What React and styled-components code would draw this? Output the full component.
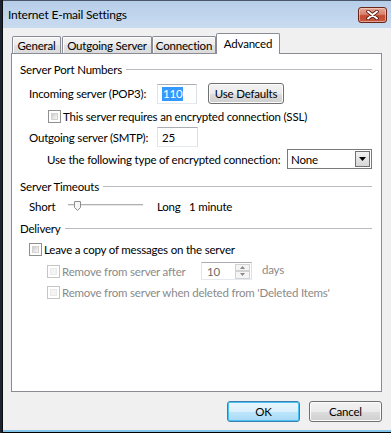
import React from "react";
import styled, { createGlobalStyle } from "styled-components";

const Global = createGlobalStyle`
  html, body { margin: 0; padding: 0; }
  body {
    width: 391px; height: 433px; overflow: hidden;
    background: #1b2435;
    font-family: Lato, "Noto Sans", sans-serif;
    font-size: 11.5px; letter-spacing: -0.2px; color: #000;
  }
  * { box-sizing: border-box; }
`;

const Window = styled.div`
  margin-left: 2px;
  width: 389px;
  height: 433px;
  border-left: 1px solid #0d0d0d;
  border-bottom: 1px solid #000;
  display: flex;
  flex-direction: column;
  background: #c4d8ee;
`;

const TitleBar = styled.div`
  height: 28px;
  border-top: 1px solid #4a5668;
  background: linear-gradient(#b6cde8 0%, #bfd4ec 40%, #c8dbf0 100%);
  display: flex;
  align-items: flex-start;
  padding-left: 5px;
`;

const Title = styled.div`
  margin-top: 6px;
  font-size: 12px;
  line-height: 16px;
  color: #000;
`;

const CloseButton = styled.div`
  margin-left: auto;
  margin-right: 4px;
  margin-top: 6px;
  width: 29px;
  height: 16px;
  border: 1px solid #6b2418;
  border-radius: 3px;
  background: linear-gradient(#e4a796 0%, #d88370 45%, #c44a33 55%, #c65a40 100%);
  box-shadow: inset 0 0 0 1px rgba(255, 220, 210, 0.55);
  display: flex;
  align-items: center;
  justify-content: center;
`;

const Client = styled.div`
  height: 402px;
  background: #f0f0f0;
  padding: 5px 9px 0 8px;
  display: flex;
  flex-direction: column;
`;

const BottomEdge = styled.div`
  height: 2px;
  background: #86c3e8;
`;

const TabRow = styled.div`
  display: flex;
  align-items: flex-end;
  height: 20px;
  padding-left: 1px;
  position: relative;
  z-index: 1;
`;

const Tab = styled.div`
  width: ${(p) => p.$w}px;
  height: ${(p) => (p.$active ? 21 : 17)}px;
  margin-right: ${(p) => p.$gap || 0}px;
  margin-bottom: ${(p) => (p.$active ? -1 : 0)}px;
  border: 1px solid #898c95;
  border-bottom: none;
  border-radius: 2px 2px 0 0;
  background: ${(p) =>
    p.$active
      ? "#ffffff"
      : "linear-gradient(#f4f4f4 0%, #ececec 50%, #e2e2e2 51%, #dbdbdb 100%)"};
  box-shadow: ${(p) => (p.$active ? "none" : "inset 1px 1px 0 #fcfcfc")};
  display: flex;
  align-items: center;
  justify-content: center;
  line-height: 15px;
  white-space: nowrap;
  padding-bottom: ${(p) => (p.$active ? 2 : 0)}px;
`;

const Panel = styled.div`
  height: 339px;
  border: 1px solid #898c95;
  background: #ffffff;
  padding: 8px 9px 0 8px;
  display: flex;
  flex-direction: column;
`;

const Header = styled.div`
  display: flex;
  align-items: center;
  height: 15px;
  line-height: 15px;
  margin-top: ${(p) => p.$mt || 0}px;
  white-space: nowrap;
  &::after {
    content: "";
    flex: 1;
    height: 1px;
    margin-left: 4px;
    background: #b8bcc0;
  }
`;

const Row = styled.div`
  display: flex;
  align-items: center;
  height: ${(p) => p.$h}px;
  margin-top: ${(p) => p.$mt}px;
  margin-left: ${(p) => p.$indent}px;
  white-space: nowrap;
  line-height: 15px;
`;

const Label = styled.span`
  width: ${(p) => (p.$w ? `${p.$w}px` : "auto")};
  flex: none;
  margin-left: ${(p) => p.$ml || 0}px;
  color: ${(p) => (p.$disabled ? "#8a8a8a" : "#000")};
  margin-top: ${(p) => p.$dy || 0}px;
`;

const TextBox = styled.div`
  width: ${(p) => p.$w}px;
  height: 20px;
  flex: none;
  border: 1px solid;
  border-color: #abadb3 #dbdfe6 #e3e9ef #e2e3ea;
  background: #fff;
  display: flex;
  align-items: center;
  padding-left: 4px;
`;

const Selected = styled.span`
  background: #3399ff;
  color: #fff;
  line-height: 14px;
  padding: 0 1px;
`;

const Button = styled.div`
  width: ${(p) => p.$w}px;
  height: 21px;
  flex: none;
  margin-left: ${(p) => p.$ml || 0}px;
  border: 1px solid ${(p) => (p.$default ? "#3c7fb1" : "#707070")};
  border-radius: 3px;
  background: ${(p) =>
    p.$default
      ? "linear-gradient(#eaf6fd 0%, #d9f0fc 50%, #bee6fd 51%, #a7d9f5 100%)"
      : "linear-gradient(#f2f2f2 0%, #ebebeb 50%, #dddddd 51%, #cfcfcf 100%)"};
  box-shadow: inset 0 0 0 1px ${(p) => (p.$default ? "#4ac0f5" : "#fcfcfc")};
  display: flex;
  align-items: center;
  justify-content: center;
  line-height: 15px;
`;

const CheckBox = styled.span`
  width: 13px;
  height: 13px;
  flex: none;
  position: relative;
  border: 1px solid ${(p) => (p.$disabled ? "#c5c5c5" : "#8e8f8f")};
  background: #fff;
  margin-right: 2px;
  &::after {
    content: "";
    position: absolute;
    inset: 2px;
    background: ${(p) =>
      p.$disabled
        ? "#f4f4f4"
        : "linear-gradient(135deg, #cbcbcb 0%, #e6e6e6 55%, #f7f7f7 100%)"};
    border: 1px solid ${(p) => (p.$disabled ? "#eaeaea" : "#d2d2d2")};
  }
`;

const CheckLabel = styled.span`
  display: flex;
  align-items: center;
  width: ${(p) => (p.$w ? `${p.$w}px` : "auto")};
  flex: none;
  color: ${(p) => (p.$disabled ? "#8a8a8a" : "#000")};
`;

const Select = styled.div`
  margin-left: auto;
  width: 85px;
  height: 20px;
  flex: none;
  border: 1px solid #7a7a7a;
  background: #fff;
  display: flex;
  align-items: center;
  padding: 1px;
  padding-left: 3px;
`;

const SelectArrow = styled.div`
  margin-left: auto;
  width: 15px;
  height: 16px;
  border: 1px solid #707070;
  background: linear-gradient(#f2f2f2, #d6d6d6);
  display: flex;
  align-items: center;
  justify-content: center;
`;

const Spinner = styled.div`
  width: 51px;
  height: 18px;
  flex: none;
  border: 1px solid;
  border-color: #abadb3 #dbdfe6 #e3e9ef #e2e3ea;
  background: #fff;
  display: flex;
  align-items: center;
  padding: 1px 1px 1px 5px;
  color: #6d6d6d;
`;

const SpinButtons = styled.div`
  margin-left: auto;
  width: 15px;
  height: 15px;
  display: flex;
  flex-direction: column;
`;

const SpinButton = styled.div`
  flex: 1;
  border: 1px solid #d2d2d2;
  background: #f4f4f4;
  display: flex;
  align-items: center;
  justify-content: center;
`;

const Footer = styled.div`
  display: flex;
  justify-content: flex-end;
  gap: 9px;
  margin-top: 9px;
`;

function Check({ disabled, children, w }) {
  return (
    <CheckLabel $disabled={disabled} $w={w}>
      <CheckBox $disabled={disabled} />
      {children}
    </CheckLabel>
  );
}

function Slider() {
  return (
    <svg width="78" height="12" viewBox="0 0 78 12" style={{ flex: "none" }}>
      <rect x="1" y="4" width="75" height="1" fill="#b0b0b0" />
      <rect x="1" y="5" width="75" height="1" fill="#e6e6e6" />
      <path d="M7.5 1.5 H13.5 V7.5 L10.5 10.5 L7.5 7.5 Z" fill="#f4f4f4" stroke="#8e8e8e" />
      <line x1="9" y1="3" x2="9" y2="7.5" stroke="#ffffff" />
    </svg>
  );
}

function Tri({ up, color = "#8a8a8a", size = 4 }) {
  return (
    <svg width={size * 2 - 1} height={size} viewBox={`0 0 ${size * 2 - 1} ${size}`}>
      <path
        d={up ? `M0 ${size} L${size - 0.5} 0 L${size * 2 - 1} ${size} Z` : `M0 0 L${size - 0.5} ${size} L${size * 2 - 1} 0 Z`}
        fill={color}
      />
    </svg>
  );
}

export default function App() {
  return (
    <>
      <Global />
      <Window>
        <TitleBar>
          <Title>Internet E-mail Settings</Title>
          <CloseButton>
            <svg width="13" height="10" viewBox="0 0 13 10">
              <path d="M2 1.5 L11 8.5 M11 1.5 L2 8.5" stroke="#5a1a10" strokeWidth="3.6" strokeLinecap="round" />
              <path d="M2 1.5 L11 8.5 M11 1.5 L2 8.5" stroke="#ffffff" strokeWidth="2" strokeLinecap="round" />
            </svg>
          </CloseButton>
        </TitleBar>
        <Client>
          <TabRow>
            <Tab $w={49} $gap={1}>General</Tab>
            <Tab $w={90}>Outgoing Server</Tab>
            <Tab $w={64}>Connection</Tab>
            <Tab $w={64} $active>Advanced</Tab>
          </TabRow>
          <Panel>
            <Header>Server Port Numbers</Header>
            <Row $mt={6} $h={21} $indent={9}>
              <Label $w={128}>Incoming server (POP3):</Label>
              <TextBox $w={40}>
                <Selected>110</Selected>
              </TextBox>
              <Button $w={76} $ml={11}>Use Defaults</Button>
            </Row>
            <Row $mt={6} $h={13} $indent={28}>
              <Check>This server requires an encrypted connection (SSL)</Check>
            </Row>
            <Row $mt={4} $h={20} $indent={9}>
              <Label $w={128}>Outgoing server (SMTP):</Label>
              <TextBox $w={41}>25</TextBox>
            </Row>
            <Row $mt={2} $h={20} $indent={27}>
              <Label>Use the following type of encrypted connection:</Label>
              <Select>
                None
                <SelectArrow>
                  <Tri color="#000" size={4} />
                </SelectArrow>
              </Select>
            </Row>
            <Header $mt={10}>Server Timeouts</Header>
            <Row $mt={2} $h={20} $indent={9}>
              <Label $w={38}>Short</Label>
              <Slider />
              <Label $w={32} $ml={12}>Long</Label>
              <Label>1 minute</Label>
            </Row>
            <Header $mt={5}>Delivery</Header>
            <Row $mt={7} $h={13} $indent={9}>
              <Check>Leave a copy of messages on the server</Check>
            </Row>
            <Row $mt={6} $h={18} $indent={27}>
              <Check disabled w={154}>Remove from server after</Check>
              <Spinner>
                10
                <SpinButtons>
                  <SpinButton>
                    <Tri up size={3} />
                  </SpinButton>
                  <SpinButton>
                    <Tri size={3} />
                  </SpinButton>
                </SpinButtons>
              </Spinner>
              <Label $ml={10} $disabled $dy={-4}>days</Label>
            </Row>
            <Row $mt={6} $h={13} $indent={27}>
              <Check disabled>Remove from server when deleted from 'Deleted Items'</Check>
            </Row>
          </Panel>
          <Footer>
            <Button $w={73} $default>OK</Button>
            <Button $w={73}>Cancel</Button>
          </Footer>
        </Client>
        <BottomEdge />
      </Window>
    </>
  );
}
